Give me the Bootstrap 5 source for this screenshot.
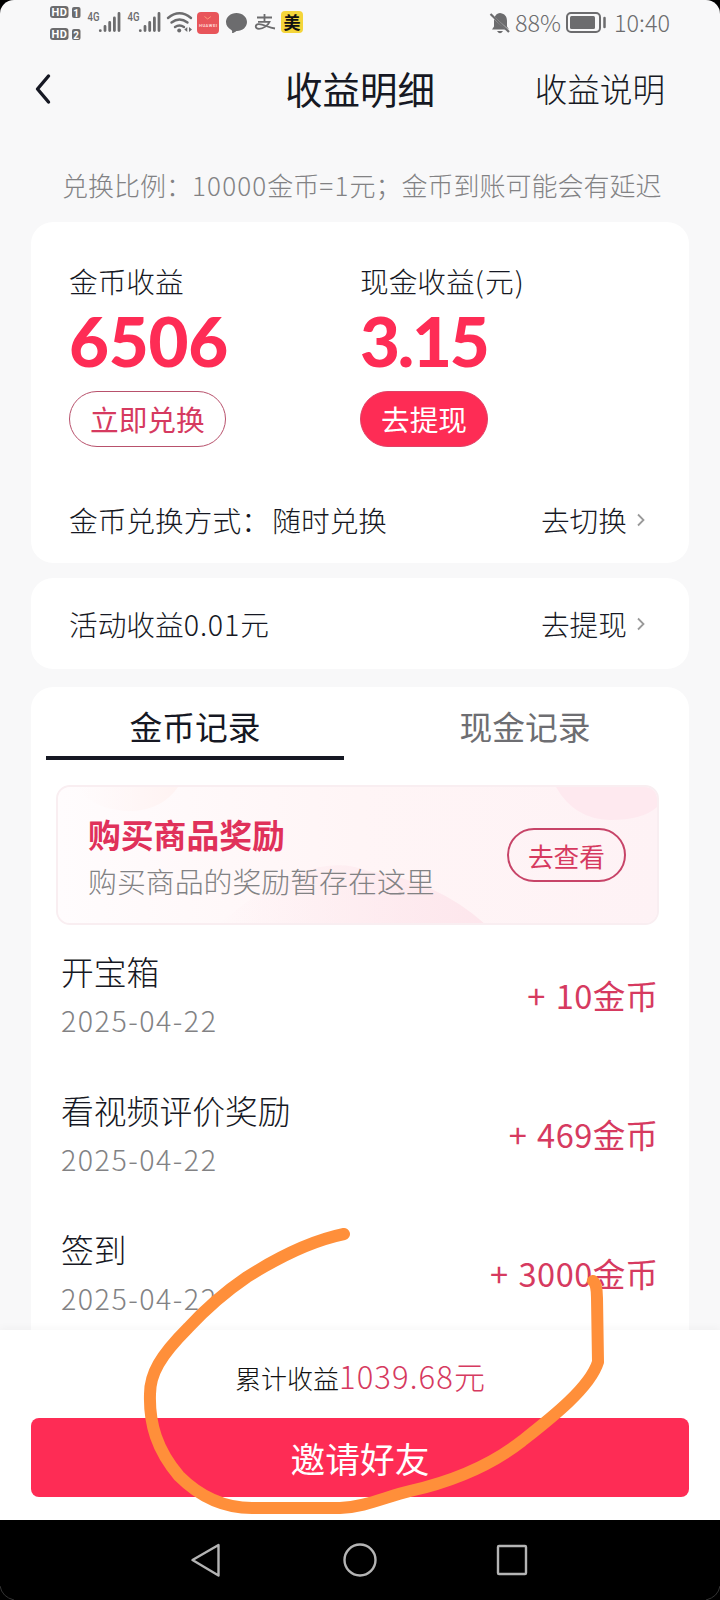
<!DOCTYPE html>
<html lang="zh-CN">
<head>
<meta charset="utf-8">
<meta name="viewport" content="width=device-width, initial-scale=1">
<title>收益明细</title>
<link href="https://cdn.jsdelivr.net/npm/bootstrap@5.3.0/dist/css/bootstrap.min.css" rel="stylesheet">
<style>
  :root { --brand: #fe2c55; --rose: #d63a60; --ink: #161823; --soft: #828284; }
  body { background: #000; font-family: "Noto Sans CJK SC", sans-serif; font-weight: 300; color: var(--ink); }
  .phone { width: 720px; height: 1600px; overflow: hidden; }
  .screen { height: 1520px; background: #f8f8f9; border-radius: 14px 14px 0 0; overflow: hidden; }
  .screen > * { flex: none; }
  .status { height: 46px; padding: 0 50px 0 49px; color: #6c6c6e; }
  .status svg { display: block; flex: none; }
  .status-text { font-size: 23.4px; line-height: 42px; margin-top: -2px; }
  .topbar { height: 88px; padding: 0 55px 0 32px; }
  .topbar h1 { font-size: 37.5px; font-weight: 400; line-height: 84px; }
  .topbar a { font-size: 32.6px; line-height: 84px; color: var(--ink); }
  .rate-note { height: 88px; line-height: 102px; font-size: 26px; color: var(--soft); padding-left: 62px; white-space: nowrap; }
  .wide { letter-spacing: 1.15px; }
  .panel { background: #fff; border-radius: 22px; margin: 0 31px; }
  .fs-row { font-size: 28.7px; line-height: 40px; }
  .panel-main { height: 341px; padding: 39px 43px 0 38px; }
  .income { width: 291px; }
  .figure { font-family: Lato, sans-serif; font-weight: 900; font-size: 69px; line-height: 60px; color: var(--brand); letter-spacing: -.3px; margin-top: 10px; }
  .figure-cash { letter-spacing: -2.2px; }
  .pill { height: 56px; border-radius: 28px; font-size: 28.7px; line-height: 54px; padding: 0 20px; border: 1px solid #b8516c; color: var(--rose); font-weight: 400; display: block; width: fit-content; margin-top: 19px; white-space: nowrap; }
  .pill-solid { background: var(--brand); border-color: #e04165; color: #fff; }
  .exchange { margin-top: 53px; }
  .chev { margin-left: 9px; }
  .panel-activity { height: 91px; margin-top: 15px; padding: 0 43px 0 38px; }
  .panel-log { flex: 1 1 0; min-height: 0; margin-top: 18px; border-radius: 22px 22px 0 0; }
  .tabs { padding: 0 15px; gap: 32px; }
  .tab { flex: 1; height: 73px; line-height: 78px; font-size: 32.8px; font-weight: 400; text-align: center; color: #6e6e72; }
  .tab.on { color: var(--ink); border-bottom: 4px solid var(--ink); }
  .promo { margin: 25px 30px 0 25px; height: 140px; border-radius: 14px; border: 2px solid #f9eef1; position: relative; overflow: hidden; background: #fff7f8; padding: 0 31px 0 30px; }
  .promo > svg { position: absolute; left: 0; top: 0; }
  .promo-copy { padding-top: 5px; }
  .promo h2 { font-size: 32.8px; font-weight: 700; line-height: 46px; color: #e0315a; }
  .promo p { font-size: 28.9px; line-height: 47px; color: var(--soft); }
  .pill-view { height: 54px; border: 2px solid #c74468; font-size: 25.7px; line-height: 51px; padding: 0 19px; margin: 0; }
  .entry { height: 139px; padding: 0 31px 0 30px; }
  .entry .what { font-size: 32.8px; line-height: 48px; }
  .entry .day { font-size: 28.6px; line-height: 44px; color: var(--soft); letter-spacing: 1.5px; margin-top: 3px; }
  .entry .sum { font-size: 32.6px; font-weight: 400; color: var(--rose); white-space: pre; word-spacing: 3px; padding-top: 1px; }
  .entry .num { letter-spacing: .5px; }
  .dock { height: 190px; background: #fff; position: relative; box-shadow: 0 -2px 8px rgba(0,0,0,.035); }
  .total { height: 88px; line-height: 91px; font-size: 26px; color: #111; }
  .total b { font-size: 31px; font-weight: 300; color: var(--rose); letter-spacing: 1.1px; margin-right: -1px; }
  .invite { display: block; margin: 0 31px; width: 658px; height: 79px; border: 0; border-radius: 8px; background: var(--brand); color: #fff; font-size: 34.7px; font-weight: 400; line-height: 76px; padding: 0; }
  .sysnav { height: 80px; }
  .scribble { position: absolute; left: 0; top: 0; pointer-events: none; }
</style>
</head>
<body>
<div class="phone position-relative">
  <main class="screen d-flex flex-column">
    <div class="status d-flex align-items-center justify-content-between">
      <svg width="260" height="46" viewBox="49 0 260 46" fill="#6c6c6e">
        <rect x="50" y="6" width="18.500" height="12" rx="3"/><rect x="50" y="28" width="18.500" height="12" rx="3"/>
        <rect x="72" y="7" width="8.500" height="11" rx="2"/><rect x="72" y="29" width="8.500" height="11" rx="2"/>
        <g fill="#fff" font-family="Roboto, sans-serif" font-weight="700" font-size="11">
          <text x="51.500" y="16" textLength="15.500">HD</text><text x="51.500" y="38" textLength="15.500">HD</text>
          <text x="73.200" y="16.500" font-size="10">1</text><text x="73.200" y="38.500" font-size="10">2</text>
        </g>
        <g font-family="Roboto, sans-serif" font-weight="500" font-size="12.500">
          <text x="87.500" y="20.500" textLength="12" lengthAdjust="spacingAndGlyphs">4G</text>
          <text x="127.500" y="20.500" textLength="12" lengthAdjust="spacingAndGlyphs">4G</text>
        </g>
        <g stroke="#6c6c6e" stroke-width="2.800" stroke-linecap="round">
          <path d="M100.300 30.600v.1M105 26.500v4M109.700 22.500v8M114.400 18v12.500M119 13.500v17"/>
          <path d="M140.300 30.600v.1M145 26.500v4M149.700 22.500v8M154.400 18v12.500M159 13.500v17"/>
        </g>
        <path d="M168 18q11.500-9.500 23 0M171.500 22.500q8-6 16 0M175 27q4.500-3 9 0" fill="none" stroke="#6c6c6e" stroke-width="2.400" stroke-linecap="round"/>
        <circle cx="179.200" cy="30.500" r="2"/><path d="M187.300 27v5l-3-2.500zM189 27v5l3-2.500z"/>
        <rect x="197" y="12" width="22" height="22" rx="4" fill="#e8555a"/>
        <path d="M204.500 16.500l3.200 2.500 3.200-2.500" fill="none" stroke="#ff9a78" stroke-width="1"/>
        <text x="199" y="26.500" font-family="Roboto, sans-serif" font-weight="700" font-size="4.200" fill="#ffd9d5" textLength="18">HUAWEI</text>
        <path d="M236.500 13c6 0 10.500 4 10.500 9s-4.500 9-10 9c-1.500 0-2 2-5 2 .5-1.500 0-2.600-1-3.200-3-1.700-5-4.300-5-7.800 0-5 4.500-9 10.500-9z"/>
        <g fill="none" stroke="#6c6c6e" stroke-width="1.800"><path d="M257 17.500h15M264.500 14v7.500M258 21.800h11.500c-1.500 3.500-6 7-10.500 7-4.500-.2-4-4.300-.5-4.600 5-.3 9 3.300 16.500 4.300"/></g>
        <rect x="281" y="11" width="22" height="22" rx="4" fill="#f4d53a"/>
        <text x="283.500" y="28.500" font-size="17" font-weight="700" font-family="Noto Sans CJK SC, sans-serif" fill="#111">美</text>
      </svg>
      <div class="d-flex align-items-center">
        <svg width="23" height="46" viewBox="489 0 23 46"><path d="M499 13.500c1-.8 3-.8 4 0 3.500 1 5 4 5 7.500v5.500l2 3H493l2-3V21c0-3.500 1.500-6.500 4-7.500zM498 31h6q-3 4.500-6 0z" fill="#6c6c6e"/><path d="M492 15l20 18" stroke="#f8f8f9" stroke-width="2"/><path d="M491.500 14l18.500 18" stroke="#6c6c6e" stroke-width="2.200"/></svg>
        <span class="status-text" style="margin-left:4px">88%</span>
        <svg class="ms-1" width="42" height="46" viewBox="564 0 42 46"><rect x="566" y="13" width="33" height="19" rx="4" fill="none" stroke="#6c6c6e" stroke-width="2"/><rect x="569" y="16" width="25" height="13" rx="1.500" fill="#6c6c6e"/><path d="M603.500 18v9" stroke="#6c6c6e" stroke-width="2.500" stroke-linecap="round"/></svg>
        <span class="status-text" style="margin-left:7px">10:40</span>
      </div>
    </div>

    <header class="topbar d-flex justify-content-between position-relative">
      <a href="#" aria-label="返回"><svg class="d-block" width="22" height="84" viewBox="0 0 22 84"><path d="M16.500 30L5.500 43 16.500 56" fill="none" stroke="#161823" stroke-width="3.400" stroke-linecap="round" stroke-linejoin="round"/></svg></a>
      <h1 class="m-0 position-absolute start-50 translate-middle-x">收益明细</h1>
      <a href="#" class="text-decoration-none">收益说明</a>
    </header>

    <div class="rate-note">兑换比例：<span class="wide">10000</span>金币<span class="wide">=1</span>元；金币到账可能会有延迟</div>

    <section class="panel panel-main">
      <div class="d-flex">
        <div class="income">
          <div class="fs-row">金币收益</div>
          <div class="figure">6506</div>
          <a href="#" class="pill text-decoration-none">立即兑换</a>
        </div>
        <div>
          <div class="fs-row">现金收益<span class="wide">(元)</span></div>
          <div class="figure figure-cash">3.15</div>
          <a href="#" class="pill pill-solid text-decoration-none">去提现</a>
        </div>
      </div>
      <div class="exchange fs-row d-flex justify-content-between">
        <span>金币兑换方式<span style="letter-spacing:2.5px">：</span>随时兑换</span>
        <span class="d-flex align-items-center">去切换<svg class="chev" width="10" height="14" viewBox="0 0 10 14"><path d="M2 1.500l5.500 5.500L2 12.500" fill="none" stroke="#999" stroke-width="1.800"/></svg></span>
      </div>
    </section>

    <section class="panel panel-activity fs-row d-flex justify-content-between align-items-center">
      <span>活动收益<span style="letter-spacing:.8px">0.01</span>元</span>
      <span class="d-flex align-items-center">去提现<svg class="chev" width="10" height="14" viewBox="0 0 10 14"><path d="M2 1.500l5.500 5.500L2 12.500" fill="none" stroke="#999" stroke-width="1.800"/></svg></span>
    </section>

    <section class="panel panel-log overflow-hidden">
      <div class="tabs d-flex"><div class="tab on">金币记录</div><div class="tab">现金记录</div></div>
      <div class="promo d-flex align-items-center justify-content-between">
        <svg width="600" height="138" viewBox="0 0 600 138">
          <defs>
            <linearGradient id="wash"><stop offset="0" stop-color="#fffcfd"/><stop offset=".5" stop-color="#fff5f6"/><stop offset="1" stop-color="#fef2f5"/></linearGradient>
            <linearGradient id="hill" x1="0" x2="1"><stop offset="0" stop-color="#fde6ec" stop-opacity="0"/><stop offset="1" stop-color="#fde6ec"/></linearGradient>
            <linearGradient id="cap" x1="0" x2="1"><stop offset="0" stop-color="#fff5f5" stop-opacity="0"/><stop offset="1" stop-color="#fff3f2"/></linearGradient>
          </defs>
          <path d="M0 0h600v138H0z" fill="url(#wash)"/>
          <path d="M20 0h100q-15 22-45 24Q35 24 20 0z" fill="url(#cap)"/>
          <path d="M160 138Q250 60 310 84q70 10 118 54z" fill="url(#hill)"/>
          <path d="M498 0q18 32 54 33 34 0 48-14V0z" fill="#fee9ef"/>
        </svg>
        <div class="position-relative promo-copy"><h2 class="m-0">购买商品奖励</h2><p class="m-0">购买商品的奖励暂存在这里</p></div>
        <a href="#" class="pill pill-view text-decoration-none position-relative">去查看</a>
      </div>
      <div class="entry d-flex justify-content-between align-items-center"><div><div class="what">开宝箱</div><div class="day">2025-04-22</div></div><div class="sum">+ <span class="num">10</span>金币</div></div>
      <div class="entry d-flex justify-content-between align-items-center"><div><div class="what">看视频评价奖励</div><div class="day">2025-04-22</div></div><div class="sum">+ <span class="num">469</span>金币</div></div>
      <div class="entry d-flex justify-content-between align-items-center"><div><div class="what">签到</div><div class="day">2025-04-22</div></div><div class="sum">+ <span class="num">3000</span>金币</div></div>
    </section>

    <footer class="dock">
      <div class="total text-center">累计收益<b>1039.68元</b></div>
      <button class="invite">邀请好友</button>
    </footer>
  </main>

  <nav class="sysnav">
    <svg class="d-block" width="720" height="80" viewBox="0 0 720 80" fill="none" stroke="#b4b4b4" stroke-width="2.400" stroke-linejoin="round">
      <path d="M218.500 25v30.500L192.500 40z"/><circle cx="360" cy="40" r="15.500"/><rect x="498" y="26" width="28" height="28" rx="1"/>
      <path d="M0 66q2 11 14 14M720 66q-2 11-14 14" stroke="#333" stroke-width="1"/>
    </svg>
  </nav>

  <svg class="scribble" width="720" height="1600" viewBox="0 0 720 1600" fill="none" stroke="#ff8f3a" stroke-width="12" stroke-linecap="round" stroke-linejoin="round">
    <path d="M344 1234C310 1241 277 1258 247 1277C222 1294 200 1315 188 1328C160 1356 150 1374 150 1394C149 1424 157 1450 179 1476C204 1501 230 1508 252 1508L340 1508C365 1507 385 1497 410 1491C450 1482 490 1466 522 1441C550 1419 590 1388 598 1362L597 1298Q597 1284 593 1281"/>
  </svg>
</div>
<script src="https://cdn.jsdelivr.net/npm/bootstrap@5.3.0/dist/js/bootstrap.bundle.min.js"></script>
</body>
</html>
